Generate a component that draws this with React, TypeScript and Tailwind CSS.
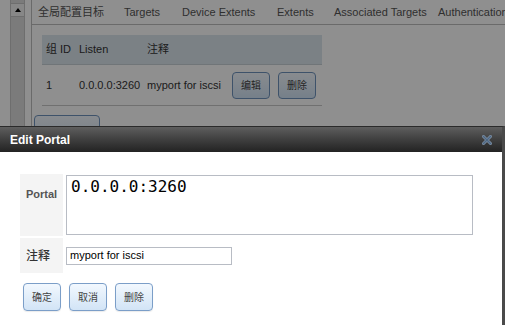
import React from "react";

const cjk = "font-['Liberation_Sans','Noto_Sans_CJK_SC',sans-serif]";

function PageBtn({ label }: { label: string }) {
  return (
    <div className="w-[38px] h-[27px] rounded-[4px] border border-[#6f93bd] bg-gradient-to-b from-[#f4f9ff] to-[#d2e4f6] flex items-center justify-center text-[10px] text-[#444]">
      {label}
    </div>
  );
}

function DlgBtn({ label }: { label: string }) {
  return (
    <div className="w-[38px] h-[28px] rounded-[4px] border border-[#7b9ec8] bg-gradient-to-b from-[#f2f8fe] to-[#d2e4f6] flex items-center justify-center text-[10px] text-[#444] shadow-[0_1px_1px_rgba(0,0,0,0.08)]">
      {label}
    </div>
  );
}

export default function App() {
  const tabs: [string, string][] = [
    ["全局配置目标", "w-[86px]"],
    ["Targets", "w-[58px]"],
    ["Device Extents", "w-[95px]"],
    ["Extents", "w-[57px]"],
    ["Associated Targets", "w-[104px]"],
    ["Authentication", "w-[80px]"],
  ];
  return (
    <div className={`relative w-[505px] h-[325px] overflow-hidden bg-white ${cjk} text-[11px] text-[#333]`}>
      {/* underlying page */}
      <div className="flex h-full">
        <div className="w-[10px] shrink-0" />
        <div className="w-[15px] shrink-0 flex flex-col bg-[#dcdcdc] border-x border-[#c4c4c4]">
          <div className="mt-[3px] h-[14px] bg-[#f0f0f0] border-y border-[#c4c4c4] flex items-center justify-center">
            <div className="w-0 h-0 border-x-[3px] border-x-transparent border-b-[4px] border-b-black" />
          </div>
        </div>
        <div className="w-[6px] shrink-0" />
        <div className="flex-1 border-l border-[#bdbdbd] flex flex-col">
          <div className="h-[25px] border-b border-[#bdbdbd] flex items-center pl-[6px] whitespace-nowrap text-[#555]">
            {tabs.map(([t, w]) => (
              <div key={t} className={`${w} shrink-0`}>{t}</div>
            ))}
          </div>
          <div className="ml-[10px] mt-[10px] w-[280px]">
            <div className="h-[30px] bg-[#dce6ee] border-b border-[#c8d0d6] flex items-center">
              <div className="w-[33px] pl-[4px]">组 ID</div>
              <div className="w-[68px] pl-[4px]">Listen</div>
              <div className="w-[85px] pl-[4px]">注释</div>
            </div>
            <div className="h-[41px] border-b border-[#c8c8c8] flex items-center">
              <div className="w-[33px] pl-[4px]">1</div>
              <div className="w-[68px] pl-[4px]">0.0.0.0:3260</div>
              <div className="w-[86px] pl-[4px]">myport for iscsi</div>
              <div className="flex gap-[8px] pl-[3px]">
                <PageBtn label="编辑" />
                <PageBtn label="删除" />
              </div>
            </div>
            <div className="mt-[9px] -ml-[8px] w-[66px] h-[27px] rounded-[4px] border border-[#6f93bd] bg-gradient-to-b from-[#f4f9ff] to-[#d2e4f6]" />
          </div>
        </div>
      </div>

      {/* modal overlay */}
      <div className="absolute inset-0 bg-black/[0.44]" />

      {/* dialog */}
      <div className="absolute left-0 top-[126px] w-[505px] h-[199px] flex flex-col bg-white border-t border-[#2a2a2a] border-r-[3px] border-r-[#4a4a4a]">
        <div className="h-[25px] shrink-0 bg-gradient-to-b from-[#5e5e5e] to-[#232323] flex items-center justify-between pl-[10px] pr-[10px]">
          <span className="text-white font-bold text-[12px]">Edit Portal</span>
          <svg width="10" height="10" viewBox="0 0 10 10">
            <path d="M1.5 1.5 L8.5 8.5 M8.5 1.5 L1.5 8.5" stroke="#7d8fa3" strokeWidth="3" strokeLinecap="square" />
            <path d="M1.5 1.5 L8.5 8.5 M8.5 1.5 L1.5 8.5" stroke="#4d6784" strokeWidth="1.4" strokeLinecap="square" />
          </svg>
        </div>
        <div className="pl-[20px] pt-[22px] flex flex-col">
          <div className="flex gap-[3px]">
            <div className="w-[43px] h-[62px] bg-[#f4f4f4] pl-[6px] pt-[12px] font-bold text-[11px] text-[#555]">Portal</div>
            <div className="w-[407px] h-[60px] mt-[1px] border border-[#b8bcc4] px-[4px] pt-[1px] font-['DejaVu_Sans_Mono',monospace] text-[16px] leading-[20px] text-black">
              0.0.0.0:3260
            </div>
          </div>
          <div className="flex gap-[3px] mt-[2px]">
            <div className="w-[43px] h-[35px] bg-[#f4f4f4] pl-[6px] flex items-center text-[12px] font-medium text-[#333]">注释</div>
            <div className="flex items-center">
              <div className="w-[166px] h-[18px] border border-[#b8bcc4] pl-[3px] flex items-center text-[11px] text-black">
                myport for iscsi
              </div>
            </div>
          </div>
          <div className="flex gap-[8px] mt-[10px] ml-[3px]">
            <DlgBtn label="确定" />
            <DlgBtn label="取消" />
            <DlgBtn label="删除" />
          </div>
        </div>
      </div>
    </div>
  );
}
